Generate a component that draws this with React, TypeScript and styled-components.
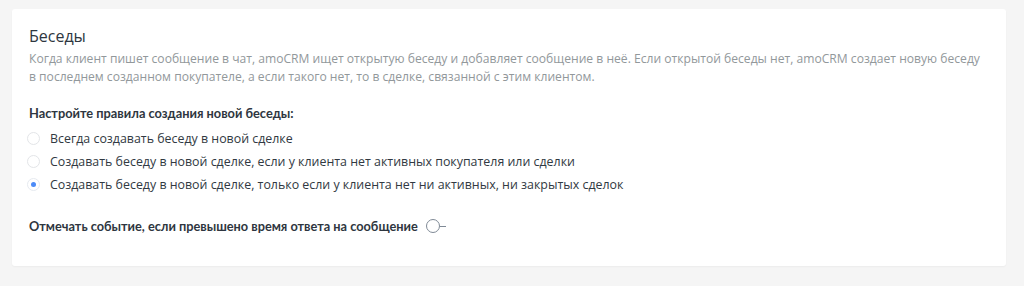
import React, { useState } from 'react';
import styled, { createGlobalStyle } from 'styled-components';

const GlobalStyle = createGlobalStyle`
  html, body {
    margin: 0;
    padding: 0;
    background: #f5f5f5;
    font-family: "Open Sans", "Noto Sans", sans-serif;
  }
`;

const Page = styled.div`
  padding: 9px 18px 20px 12px;
`;

const Card = styled.section`
  background: #fff;
  border-radius: 3px;
  box-shadow: 0 1px 2px rgba(0, 0, 0, 0.04);
  padding: 16px 17px 30px 17px;
  height: 257px;
  box-sizing: border-box;
`;

const Title = styled.h2`
  margin: 0;
  font-size: 16px;
  font-weight: 400;
  line-height: 22px;
  color: #2e3640;
`;

const Description = styled.p`
  margin: 3px 0 0;
  font-size: 12.12px;
  line-height: 18px;
  color: #92989b;
  white-space: nowrap;
`;

const Heading = styled.div`
  margin-top: 18px;
  font-family: Lato, "Open Sans", sans-serif;
  font-size: 12.8px;
  font-weight: 700;
  line-height: 18px;
  color: #2e3640;
`;

const RadioList = styled.div`
  display: flex;
  flex-direction: column;
  margin-top: 5px;
`;

const RadioRow = styled.label`
  display: flex;
  align-items: center;
  gap: 10px;
  height: 23px;
  margin-left: -2px;
  font-size: 12.4px;
  color: #313942;
  cursor: pointer;
`;

const RadioDot = styled.span<{ $checked: boolean }>`
  width: 11px;
  height: 11px;
  border-radius: 50%;
  border: 1px solid ${p => (p.$checked ? '#e6eaf0' : '#e3e5e8')};
  display: flex;
  align-items: center;
  justify-content: center;
  flex-shrink: 0;

  &::after {
    content: '';
    width: 5px;
    height: 5px;
    border-radius: 50%;
    background: #4c8bf7;
    display: ${p => (p.$checked ? 'block' : 'none')};
  }
`;

const ToggleRow = styled.div`
  display: flex;
  align-items: center;
  gap: 8px;
  margin-top: 22px;
  font-family: Lato, "Open Sans", sans-serif;
  font-size: 12.75px;
  font-weight: 700;
  color: #2e3640;
`;

const Toggle = styled.span`
  display: flex;
  align-items: center;

  &::before {
    content: '';
    width: 12px;
    height: 12px;
    border: 1px solid #7f8a96;
    border-radius: 50%;
  }

  &::after {
    content: '';
    width: 6px;
    height: 1px;
    background: #7f8a96;
  }
`;

const options = [
  'Всегда создавать беседу в новой сделке',
  'Создавать беседу в новой сделке, если у клиента нет активных покупателя или сделки',
  'Создавать беседу в новой сделке, только если у клиента нет ни активных, ни закрытых сделок',
];

export default function App() {
  const [selected, setSelected] = useState(2);
  return (
    <>
      <GlobalStyle />
      <Page>
        <Card>
          <Title>Беседы</Title>
          <Description>
            Когда клиент пишет сообщение в чат, amoCRM ищет открытую беседу и добавляет сообщение в неё. Если открытой беседы нет, amoCRM создает новую беседу
            <br />
            в последнем созданном покупателе, а если такого нет, то в сделке, связанной с этим клиентом.
          </Description>
          <Heading>Настройте правила создания новой беседы:</Heading>
          <RadioList>
            {options.map((text, i) => (
              <RadioRow key={i} onClick={() => setSelected(i)}>
                <RadioDot $checked={selected === i} />
                {text}
              </RadioRow>
            ))}
          </RadioList>
          <ToggleRow>
            Отмечать событие, если превышено время ответа на сообщение
            <Toggle />
          </ToggleRow>
        </Card>
      </Page>
    </>
  );
}
